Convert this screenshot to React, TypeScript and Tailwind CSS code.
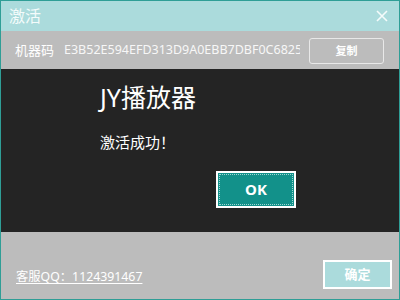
import React from 'react';

const font = { fontFamily: '"Noto Sans", "Noto Sans CJK SC", sans-serif' };

const App = () => (
  <div className="w-[400px] h-[300px] border border-[#2f9e96] bg-[#bcbcbc] flex flex-col text-white" style={font}>
    {/* title bar */}
    <div className="h-[30px] bg-[#abdbdc] flex items-center justify-between pl-[8px] pr-[11px]">
      <span className="text-[16px] leading-none text-[#f4fbfb]">激活</span>
      <svg width="12" height="12" viewBox="0 0 12 12" className="text-[#f4fbfb]">
        <path d="M1 1 L11 11 M11 1 L1 11" stroke="currentColor" strokeWidth="1.6" />
      </svg>
    </div>

    {/* machine code row */}
    <div className="h-[38px] flex items-center pl-[14px] pr-[15px]">
      <span className="text-[13px] leading-none mr-[10px]">机器码</span>
      <span className="w-[236px] overflow-hidden whitespace-nowrap text-[12.5px] leading-none text-[#f7f7f7]">
        E3B52E594EFD313D9A0EBB7DBF0C6825D
      </span>
      <button className="ml-auto w-[75px] h-[26px] mt-[1px] border border-[#e8e8e8] rounded-[3px] text-[11px] font-bold leading-none">
        复制
      </button>
    </div>

    {/* message band */}
    <div className="h-[163px] bg-[#242424] pl-[99px] pt-[12px]">
      <div className="text-[25px] leading-[32px]">JY播放器</div>
      <div className="text-[15px] leading-[20px] mt-[19px]">激活成功！</div>
      <div className="pl-[116px] mt-[19px]">
        <button className="w-[80px] h-[37px] bg-[#12918a] border-2 border-white p-[1px]">
          <div className="w-full h-full border border-dotted border-[#9fd8d4] flex items-center justify-center text-[15px] font-bold">
            OK
          </div>
        </button>
      </div>
    </div>

    {/* footer */}
    <div className="flex-1 flex items-end justify-between pl-[15px] pr-[7px] pb-[10px]">
      <span className="text-[12.3px] leading-none underline underline-offset-2 mb-[6px]">客服QQ：1124391467</span>
      <button className="w-[69px] h-[29px] bg-[#abdbdc] border-2 border-white text-[13px] font-bold leading-none">
        确定
      </button>
    </div>
  </div>
);

export default App;
